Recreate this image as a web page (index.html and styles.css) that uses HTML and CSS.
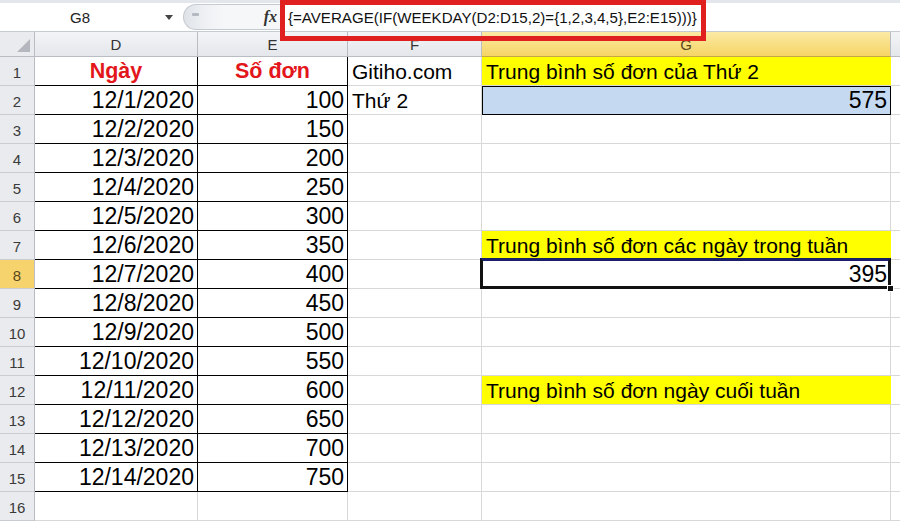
FILE: index.html
```html
<!DOCTYPE html>
<html>
<head>
<meta charset="utf-8">
<link rel="stylesheet" href="styles.css">
</head>
<body>
<div class="app">
  <div class="fbar">
    <div class="namebox"><span class="ref">G8</span><span class="dd"></span></div>
    <div class="pill"><span class="knob"></span><span class="fx">fx</span></div>
    <div class="formula"><span class="ftext">{=AVERAGE(IF(WEEKDAY(D2:D15,2)={1,2,3,4,5},E2:E15)))}</span></div>
    <div class="redbox"></div>
  </div>
  <div class="sheet">
    <div class="corner"><span class="tri"></span></div>
    <div class="ch">D</div><div class="ch">E</div><div class="ch">F</div><div class="ch sel">G</div><div class="ch last"></div>

    <div class="rh">1</div><div class="c b ctr hd">Ngày</div><div class="c b ctr hd">Số đơn</div><div class="c">Gitiho.com</div><div class="c yel">Trung bình số đơn của Thứ 2</div><div class="c last"></div>
    <div class="rh">2</div><div class="c b r n">12/1/2020</div><div class="c b r n">100</div><div class="c">Thứ 2</div><div class="c blue r n">575</div><div class="c last"></div>
    <div class="rh">3</div><div class="c b r n">12/2/2020</div><div class="c b r n">150</div><div class="c"></div><div class="c"></div><div class="c last"></div>
    <div class="rh">4</div><div class="c b r n">12/3/2020</div><div class="c b r n">200</div><div class="c"></div><div class="c"></div><div class="c last"></div>
    <div class="rh">5</div><div class="c b r n">12/4/2020</div><div class="c b r n">250</div><div class="c"></div><div class="c"></div><div class="c last"></div>
    <div class="rh">6</div><div class="c b r n">12/5/2020</div><div class="c b r n">300</div><div class="c"></div><div class="c"></div><div class="c last"></div>
    <div class="rh">7</div><div class="c b r n">12/6/2020</div><div class="c b r n">350</div><div class="c"></div><div class="c yel">Trung bình số đơn các ngày trong tuần</div><div class="c last"></div>
    <div class="rh rsel">8</div><div class="c b r n">12/7/2020</div><div class="c b r n">400</div><div class="c"></div><div class="c r n active">395<span class="handle"></span></div><div class="c last"></div>
    <div class="rh">9</div><div class="c b r n">12/8/2020</div><div class="c b r n">450</div><div class="c"></div><div class="c"></div><div class="c last"></div>
    <div class="rh">10</div><div class="c b r n">12/9/2020</div><div class="c b r n">500</div><div class="c"></div><div class="c"></div><div class="c last"></div>
    <div class="rh">11</div><div class="c b r n">12/10/2020</div><div class="c b r n">550</div><div class="c"></div><div class="c"></div><div class="c last"></div>
    <div class="rh">12</div><div class="c b r n">12/11/2020</div><div class="c b r n">600</div><div class="c"></div><div class="c yel">Trung bình số đơn ngày cuối tuần</div><div class="c last"></div>
    <div class="rh">13</div><div class="c b r n">12/12/2020</div><div class="c b r n">650</div><div class="c"></div><div class="c"></div><div class="c last"></div>
    <div class="rh">14</div><div class="c b r n">12/13/2020</div><div class="c b r n">700</div><div class="c"></div><div class="c"></div><div class="c last"></div>
    <div class="rh">15</div><div class="c b r n">12/14/2020</div><div class="c b r n">750</div><div class="c"></div><div class="c"></div><div class="c last"></div>
    <div class="rh">16</div><div class="c"></div><div class="c"></div><div class="c"></div><div class="c"></div><div class="c last"></div>
  </div>
</div>
</body>
</html>
```
FILE: styles.css
```css
* { box-sizing: border-box; }
html, body { margin: 0; padding: 0; background: #fff; }
body { width: 900px; height: 523px; overflow: hidden; font-family: "Liberation Sans", Arial, sans-serif; }
.app { width: 900px; height: 523px; display: flex; flex-direction: column; }

.fbar {
  position: relative;
  height: 32px;
  display: flex;
  align-items: stretch;
  background: #fff;
  border-top: 3px solid #e3e6ea;
  border-bottom: 1px solid #c6cbd1;
}
.namebox {
  width: 183px;
  display: flex;
  align-items: center;
  background: #fff;
}
.ref { width: 160px; text-align: center; font-size: 15px; color: #222; }
.dd {
  width: 0; height: 0;
  border-left: 4px solid transparent;
  border-right: 4px solid transparent;
  border-top: 5px solid #444;
  margin-left: 5px;
}
.pill {
  width: 97px;
  margin: 1px 0;
  background: linear-gradient(90deg, #dfe3e8 0, #eef0f3 20px, #f6f7f9 40px, #f6f7f9 100%);
  border: 1px solid #c5cad0;
  border-right: none;
  border-radius: 13px 0 0 13px;
  display: flex;
  align-items: center;
  padding: 0 3px 0 8px;
}
.knob {
  width: 7px; height: 3px;
  background: #b4bac2;
  border-radius: 1px;
  margin-top: -6px;
}
.fx {
  margin-left: auto;
  font-family: "Liberation Serif", serif;
  font-style: italic;
  font-weight: bold;
  font-size: 16px;
  color: #333;
}
.formula {
  flex: 1;
  display: flex;
  align-items: center;
  padding-left: 7px;
  border-left: 1px solid #d0d4d9;
  background: #fff;
}
.ftext { font-size: 15.1px; color: #111; }
.redbox {
  position: absolute;
  left: 280px; top: -3px;
  width: 426px; height: 41px;
  border: 5px solid #e0201f;
  z-index: 5;
  pointer-events: none;
}

.sheet {
  display: grid;
  grid-template-columns: 35px 163px 150px 134px 409px 1fr;
  grid-template-rows: 25px repeat(16, 29px);
  flex: 1;
}
.corner {
  background: #e9ebee;
  border-right: 1px solid #b9bdc3;
  border-bottom: 1px solid #b9bdc3;
  position: relative;
}
.tri {
  position: absolute;
  right: 4px; bottom: 4px;
  width: 0; height: 0;
  border-left: 13px solid transparent;
  border-bottom: 13px solid #b4b8be;
}
.ch {
  background: linear-gradient(#f3f4f6, #e4e7eb);
  border-right: 1px solid #b9bdc3;
  border-bottom: 1px solid #b9bdc3;
  display: flex;
  align-items: center;
  justify-content: center;
  font-size: 15px;
  color: #333;
}
.ch.sel {
  background: linear-gradient(#fbe9a5, #f6d565);
  color: #5a4a1a;
  border-bottom-color: #c9a543;
}
.ch.last { border-right: none; }
.rh {
  background: #e9ebee;
  border-right: 1px solid #b9bdc3;
  border-bottom: 1px solid #c9ccd1;
  display: flex;
  align-items: center;
  justify-content: center;
  font-size: 15px;
  color: #3a3a3a;
  padding-top: 2px;
}
.rh.rsel { background: #f7d36e; color: #5a4a1a; }
.c {
  border-right: 1px solid #d8d8d8;
  border-bottom: 1px solid #d8d8d8;
  font-size: 21px;
  color: #000;
  display: flex;
  align-items: center;
  padding: 1px 4px 0 4px;
  white-space: nowrap;
  position: relative;
}
.c.n { font-size: 23px; padding-right: 3px; }
.c.last { border-right: none; }
.c.b { border-right-color: #000; border-bottom-color: #000; }
.c.r { justify-content: flex-end; }
.c.ctr { justify-content: center; }
.c.hd { color: #e3161b; font-weight: bold; font-size: 21.5px; }
.c.yel { background: #ffff00; border-right-color: #ffff00; }
.c.blue {
  background: #c5d9f1;
  border-right-color: #000;
  border-bottom-color: #000;
  box-shadow: inset 1px 1px 0 #000;
}
.c.active::after {
  content: "";
  position: absolute;
  left: -2px; top: -2px; right: -1px; bottom: -1px;
  border: 3px solid #111;
  border-top-color: #1b1f6b;
  pointer-events: none;
}
.handle {
  position: absolute;
  right: -4px; bottom: -4px;
  width: 7px; height: 7px;
  background: #111;
  border: 1px solid #fff;
  z-index: 2;
}
```
